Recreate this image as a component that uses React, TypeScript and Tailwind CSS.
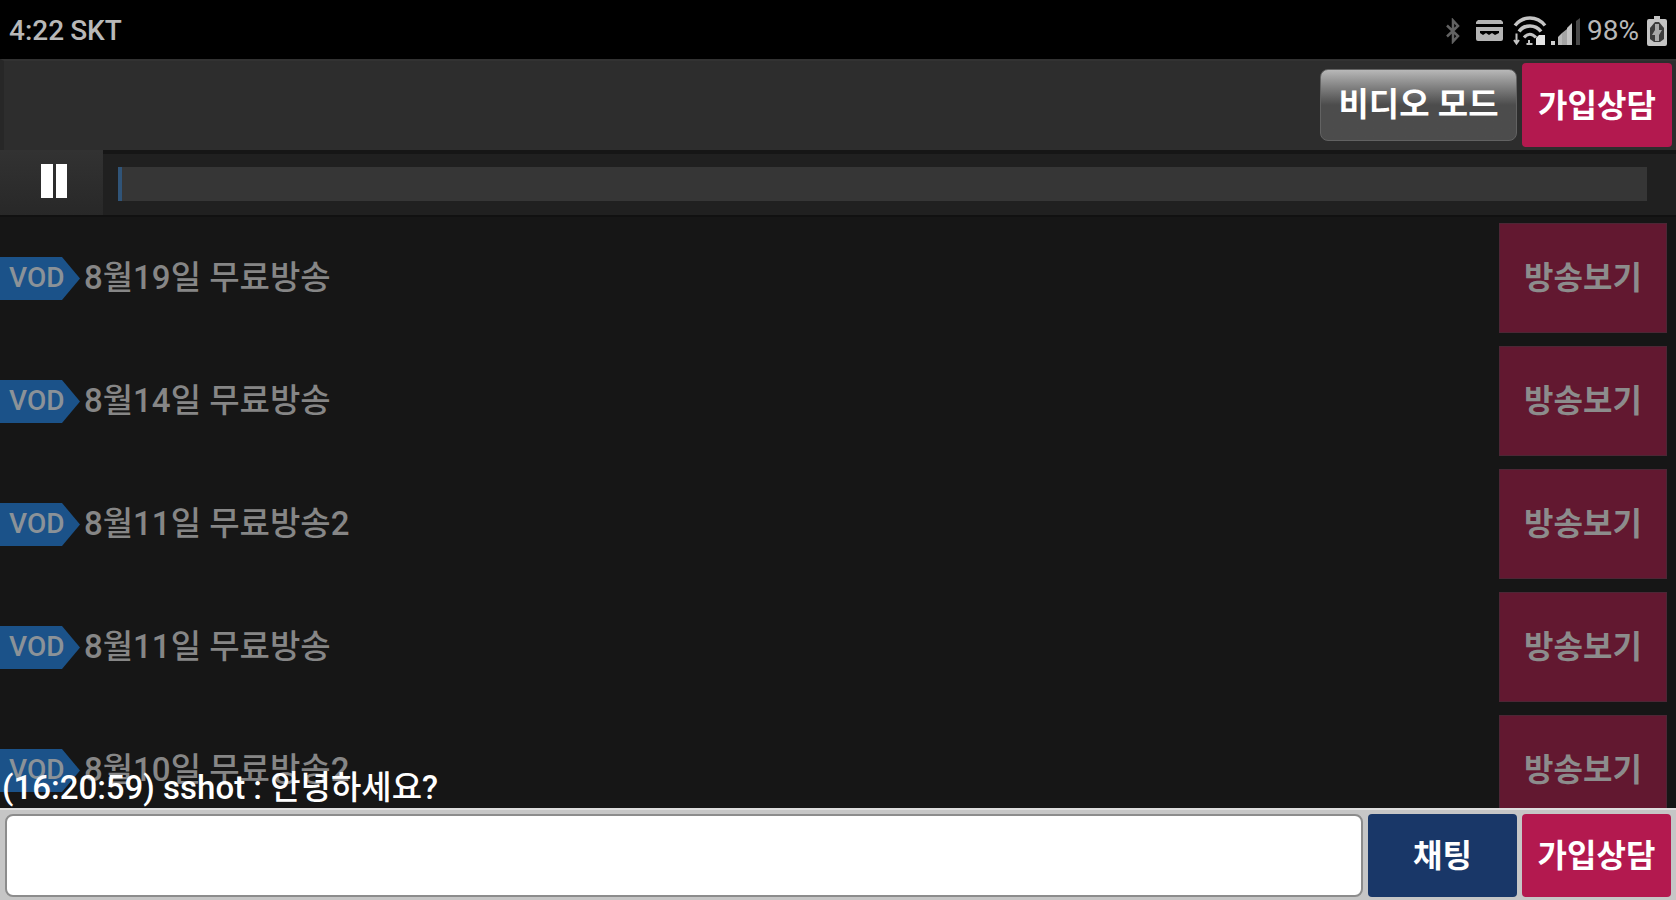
import { useState } from "react";

const broadcasts = [
  { id: 1, title: "8월19일 무료방송" },
  { id: 2, title: "8월14일 무료방송" },
  { id: 3, title: "8월11일 무료방송2" },
  { id: 4, title: "8월11일 무료방송" },
  { id: 5, title: "8월10일 무료방송2" },
];

function BluetoothIcon() {
  return (
    <svg width="14" height="26" viewBox="0 0 14 26" fill="none" stroke="#626262" strokeWidth="2.5" aria-hidden="true">
      <path d="M1 7.5 12 18l-5 5.5V2.5L12 8 1 18.5" />
    </svg>
  );
}

function CardIcon() {
  return (
    <svg width="27" height="22" viewBox="0 0 27 22" fill="#b4b4b4" aria-hidden="true">
      <path d="M2 0h23l2 2v2H0V2z" />
      <path fillRule="evenodd" d="M0 7h27v12a2 2 0 0 1-2 2H2a2 2 0 0 1-2-2zM4 11v2l3 2 3-2 3 2 3-2 3 2 4-2v-2z" />
    </svg>
  );
}

function WifiIcon() {
  return (
    <svg width="34" height="30" viewBox="0 0 34 30" fill="none" stroke="#c4c4c4" strokeWidth="3.5" aria-hidden="true">
      <path d="M2 9.500C10-.5 24-.5 32 9.500" />
      <path d="M6 15.500c5.500-7.500 16.500-7.500 22 0" />
      <path d="M11 21.500c3.500-4.500 8-4.500 12 0" strokeWidth="3" />
      <path d="M3.500 17.500v9M1 24l2.500 3.500L6 24M16 24v4M13.500 28h6" strokeWidth="2" />
      <path d="M26 19h6v10h-9v-7z" fill="#e4e4e4" stroke="none" />
    </svg>
  );
}

function SignalIcon() {
  return (
    <svg width="30" height="28" viewBox="0 0 30 28" aria-hidden="true">
      <path d="M0 24h4v4H0z" fill="#d0d0d0" />
      <path d="M7 20l4-4v12H7z" fill="#b8b8b8" />
      <path d="M11 16l5-4v16h-5z" fill="#a4a4a4" />
      <path d="M16 11l5-5v22h-5z" fill="#c4c4c4" />
      <path d="M25 4l4-3v27h-4z" fill="#484848" />
    </svg>
  );
}

function BatteryIcon() {
  return (
    <svg width="20" height="30" viewBox="0 0 20 30" aria-hidden="true">
      <path d="M7 0h6v3h5a2 2 0 0 1 2 2v23a2 2 0 0 1-2 2H2a2 2 0 0 1-2-2V5a2 2 0 0 1 2-2h5z" fill="#c4c4c4" />
      <path d="M8 6 3 12v11l4 3h6l4-3V12l-5-6z" fill="#3c3c3c" />
      <path d="M8 8h4v6h3l-3 5v6H8v-6H5l3-5z" fill="#a8a8a8" />
    </svg>
  );
}

function PauseIcon() {
  return (
    <svg width="28" height="34" viewBox="0 0 28 34" fill="#fff" aria-hidden="true">
      <path d="M1 0h12v34H1zM16 0h11v34H16z" />
    </svg>
  );
}

function VodBadge() {
  return (
    <div className="relative flex h-[43px] w-20 items-center pl-[9px] text-[28px] font-medium text-[#8b9298]">
      <svg className="absolute inset-0" width="80" height="43" viewBox="0 0 80 43" aria-hidden="true">
        <path d="M0 0h62l18 21.500L62 43H0z" fill="#1b5289" />
      </svg>
      <span className="relative">VOD</span>
    </div>
  );
}

export default function App() {
  const [message, setMessage] = useState("");

  return (
    <main className="flex h-screen flex-col overflow-hidden bg-[#161616] font-['Roboto','Noto_Sans_CJK_KR',sans-serif]">
      {/* Status bar */}
      <div className="flex h-[59px] shrink-0 items-center justify-between bg-black pt-[2px] pr-[9px] pl-[9px] text-[28px] text-[#b8b8b8]">
        <div className="flex gap-[6px] font-medium">
          <span>4:22</span>
          <span>SKT</span>
        </div>
        <div className="flex items-center">
          <BluetoothIcon />
          <div className="ml-4">
            <CardIcon />
          </div>
          <div className="ml-[10px]">
            <WifiIcon />
          </div>
          <div className="ml-1">
            <SignalIcon />
          </div>
          <span className="mr-2 ml-[6px]">98%</span>
          <BatteryIcon />
        </div>
      </div>

      {/* Header */}
      <header className="flex h-[91px] shrink-0 items-start justify-end gap-[5px] border-t-2 border-l-4 border-t-[#323232] border-l-[#272727] bg-[#2d2d2d] pt-[2px] pr-1">
        <button
          type="button"
          className="mt-[6px] h-[72px] w-[197px] rounded-lg border border-[#626262] bg-linear-to-b from-[#b8b8b8] via-[#4c4c4c] via-50% to-[#4c4c4c] text-[33px] font-bold text-white"
        >
          비디오 모드
        </button>
        <button type="button" className="h-[84px] w-[150px] rounded bg-[#b3194f] pt-[2px] text-[32px] font-bold text-white">
          가입상담
        </button>
      </header>

      {/* Player */}
      <div className="flex h-[67px] shrink-0 border-b-2 border-[#111] bg-[#202020]">
        <button
          type="button"
          aria-label="일시정지"
          className="flex w-[103px] items-center justify-center bg-linear-to-b from-[#323232] to-[#282828] pl-1 pb-1"
        >
          <PauseIcon />
        </button>
        <div className="flex flex-1 items-center border-t-4 border-[#161616] pr-[29px] pb-[2px] pl-[15px]">
          <div className="h-[34px] flex-1 border-l-4 border-[#305478] bg-[#363636]" />
        </div>
      </div>

      {/* VOD list */}
      <section className="relative min-h-0 flex-1 overflow-hidden">
        <ul className="flex flex-col gap-[13px] pt-[6px] pr-[9px]">
          {broadcasts.map((item) => (
            <li key={item.id} className="flex items-center">
              <VodBadge />
              <span className="ml-1 flex-1 text-[33px] font-medium text-[#868686]">{item.title}</span>
              <button
                type="button"
                className="h-[110px] w-[168px] border border-[#4d2635] bg-[#621830] text-[32px] font-bold text-[#8c8c8c]"
              >
                방송보기
              </button>
            </li>
          ))}
        </ul>
        <p className="absolute bottom-0 left-[2px] text-[33px] leading-10 font-medium text-white">
          (16:20:59) sshot : 안녕하세요?
        </p>
      </section>

      {/* Chat form */}
      <form
        className="flex h-[92px] shrink-0 gap-[5px] border-t-2 border-[#dedede] bg-[#c6c6c6] pt-1 pr-[5px] pb-[3px] pl-[5px]"
        onSubmit={(e) => e.preventDefault()}
      >
        <input
          type="text"
          aria-label="채팅 입력"
          value={message}
          onChange={(e) => setMessage(e.target.value)}
          className="min-w-0 flex-1 rounded-lg border-2 border-[#8c8c8c] bg-white px-4 text-[32px] text-black outline-none"
        />
        <button type="submit" className="w-[149px] rounded-sm bg-[#193768] text-[32px] font-bold text-white">
          채팅
        </button>
        <button type="button" className="w-[149px] rounded-sm bg-[#b3194f] text-[32px] font-bold text-white">
          가입상담
        </button>
      </form>
    </main>
  );
}
